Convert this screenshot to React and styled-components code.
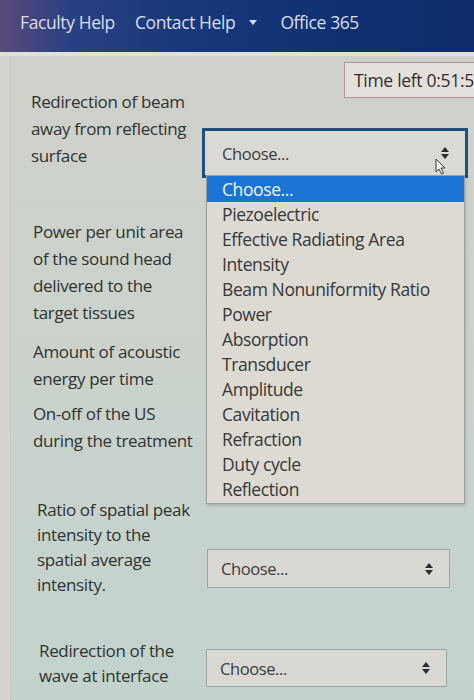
import React from 'react';
import styled, { createGlobalStyle } from 'styled-components';

const GlobalStyle = createGlobalStyle`
	html, body {
		margin: 0;
		padding: 0;
	}
	body {
		background: #cdd2cd;
		font-family: 'Open Sans', 'Noto Sans', sans-serif;
		color: #2f3330;
		overflow: hidden;
	}
`;

const Page = styled.div`
	width: 474px;
	height: 700px;
	background: linear-gradient(180deg, #d0d0cb 0%, #cbd2cc 50%, #c2d3ce 100%);
	overflow: hidden;
`;

const NavBar = styled.nav`
	height: 52px;
	display: flex;
	align-items: center;
	gap: 20px;
	padding-left: 20px;
	background: linear-gradient(90deg, #5a4a7a 0%, #2c4082 14%, #16377b 40%, #0f3070 75%, #0d2c68 100%);
	border-bottom: 4px solid #dfdfdb;
`;

const NavItem = styled.span`
	color: #d9dee9;
	font-size: 17.5px;
	letter-spacing: -0.4px;
	display: flex;
	align-items: center;
	gap: 10px;
	margin-top: -8px;
`;

const Caret = styled.span`
	width: 0;
	height: 0;
	border-left: 4px solid transparent;
	border-right: 4px solid transparent;
	border-top: 5px solid #d9dee9;
	margin-left: 4px;
	margin-right: 3px;
`;

const Body = styled.div`
	display: flex;
`;

const SideStrip = styled.div`
	width: 10px;
	height: 644px;
	flex-shrink: 0;
	background: #d6d3d0;
	border-right: 1px solid #c8c8c4;
`;

const Content = styled.div`
	flex: 1;
	padding: 6px 0 0 20px;
`;

const TimerRow = styled.div`
	display: flex;
	justify-content: flex-end;
	height: 26px;
`;

const Timer = styled.div`
	width: 130px;
	height: 36px;
	box-sizing: border-box;
	padding: 5px 0 0 9px;
	background: #e6e0dd;
	border: 1px solid #b39492;
	border-right: none;
	font-size: 17.5px;
	letter-spacing: -0.3px;
	white-space: nowrap;
	overflow: hidden;
	color: #2e2e2e;
`;

const Row = styled.div`
	display: flex;
	margin-top: ${p => p.$top}px;
	padding-left: ${p => p.$shift || 0}px;
`;

const Label = styled.div`
	width: 168px;
	flex-shrink: 0;
	font-size: 17px;
	letter-spacing: -0.35px;
	line-height: ${p => p.$lh || 27}px;
	white-space: nowrap;
	color: #2f3330;
`;

const SelectWrap = styled.div`
	position: relative;
	margin-top: ${p => p.$offset}px;
	margin-left: ${p => p.$left}px;
	width: ${p => p.$width}px;
`;

const SelectBox = styled.div`
	height: ${p => p.$height}px;
	box-sizing: border-box;
	display: flex;
	align-items: center;
	justify-content: space-between;
	padding: 0 16px 0 ${p => (p.$focused ? 17 : 13)}px;
	background: ${p => (p.$focused ? '#dbd9d4' : '#d9d8d4')};
	border: ${p => (p.$focused ? '3px solid #1d4f78' : '1px solid #9ea5a2')};
	font-size: 16.5px;
	letter-spacing: -0.4px;
	color: #3a3c3b;
`;

const Spinner = () => (
	<svg width="8" height="12" viewBox="0 0 8 12">
		<path d="M4 0 L8 5 L0 5 Z" fill="#2a2d30" />
		<path d="M4 12 L8 7 L0 7 Z" fill="#2a2d30" />
	</svg>
);

const Cursor = styled.svg`
	position: absolute;
	right: 22px;
	top: 30px;
`;

const DropList = styled.ul`
	position: absolute;
	top: 47px;
	left: 4px;
	width: 257px;
	margin: 0;
	padding: 0 0 1px;
	list-style: none;
	background: #dddad3;
	border: 1px solid #9c9e9a;
	box-shadow: 1px 2px 3px rgba(0, 0, 0, 0.15);
	z-index: 2;
`;

const Option = styled.li`
	height: ${p => (p.$active ? 26 : 25)}px;
	line-height: ${p => (p.$active ? 26 : 25)}px;
	padding-left: 15px;
	font-size: 17.5px;
	letter-spacing: -0.4px;
	background: ${p => (p.$active ? '#1b74d3' : 'transparent')};
	color: ${p => (p.$active ? '#eef3fb' : '#363837')};
	white-space: nowrap;
`;

const options = [
	'Piezoelectric',
	'Effective Radiating Area',
	'Intensity',
	'Beam Nonuniformity Ratio',
	'Power',
	'Absorption',
	'Transducer',
	'Amplitude',
	'Cavitation',
	'Refraction',
	'Duty cycle',
	'Reflection',
];

const Select = ({ width, offset, left, height, focused, open }) => (
	<SelectWrap $width={width} $offset={offset} $left={left}>
		<SelectBox $height={height} $focused={focused}>
			<span>Choose...</span>
			<Spinner />
		</SelectBox>
		{focused && (
			<Cursor width="11" height="17" viewBox="0 0 11 17">
				<path d="M1 1 L1 14 L4 11 L6.5 16 L8.5 15 L6 10 L10 10 Z" fill="#f4f4f4" stroke="#3a3a3a" strokeWidth="1" />
			</Cursor>
		)}
		{open && (
			<DropList>
				<Option $active>Choose...</Option>
				{options.map(o => (
					<Option key={o}>{o}</Option>
				))}
			</DropList>
		)}
	</SelectWrap>
);

const App = () => (
	<Page>
		<GlobalStyle />
		<NavBar>
			<NavItem>Faculty Help</NavItem>
			<NavItem>
				Contact Help
				<Caret />
			</NavItem>
			<NavItem>Office 365</NavItem>
		</NavBar>
		<Body>
			<SideStrip />
			<Content>
				<TimerRow>
					<Timer>Time left 0:51:5</Timer>
				</TimerRow>
				<Row $top={0}>
					<Label>
						Redirection of beam
						<br />
						away from reflecting
						<br />
						surface
					</Label>
					<Select width={266} offset={40} left={3} height={50} focused open />
				</Row>
				<Row $top={40} $shift={2}>
					<Label>
						Power per unit area
						<br />
						of the sound head
						<br />
						delivered to the
						<br />
						target tissues
					</Label>
				</Row>
				<Row $top={12} $shift={2}>
					<Label>
						Amount of acoustic
						<br />
						energy per time
					</Label>
				</Row>
				<Row $top={8} $shift={2}>
					<Label>
						On-off of the US
						<br />
						during the treatment
					</Label>
				</Row>
				<Row $top={43} $shift={6}>
					<Label $lh={25}>
						Ratio of spatial peak
						<br />
						intensity to the
						<br />
						spatial average
						<br />
						intensity.
					</Label>
					<Select width={243} offset={52} left={2} height={39} />
				</Row>
				<Row $top={41} $shift={8}>
					<Label $lh={25}>
						Redirection of the
						<br />
						wave at interface
					</Label>
					<Select width={241} offset={11} left={-1} height={38} />
				</Row>
			</Content>
		</Body>
	</Page>
);

export default App;
